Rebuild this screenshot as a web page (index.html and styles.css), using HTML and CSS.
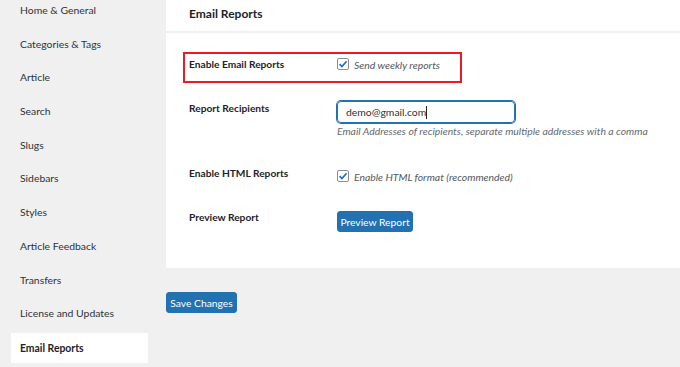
FILE: index.html
```html
<!DOCTYPE html>
<html lang="en">
<head>
<meta charset="UTF-8" />
<title>Email Reports</title>
<link rel="stylesheet" href="styles.css">
</head>
<body>
<div class="layout">
  <ul class="side-nav">
    <li>Home &amp; General</li>
    <li>Categories &amp; Tags</li>
    <li>Article</li>
    <li>Search</li>
    <li>Slugs</li>
    <li>Sidebars</li>
    <li>Styles</li>
    <li>Article Feedback</li>
    <li>Transfers</li>
    <li>License and Updates</li>
    <li class="active">Email Reports</li>
  </ul>

  <div class="content">
    <div class="panel">
      <div class="panel-head"><h2>Email Reports</h2></div>
      <div class="rows">
        <div class="row highlight">
          <div class="label">Enable Email Reports</div>
          <label class="check">
            <span class="box"><svg viewBox="0 0 12 12" width="12" height="12"><path d="M2.6 6.2 L5 8.6 L9.6 3.2" fill="none" stroke="#2271b1" stroke-width="1.7"/></svg></span>
            <span class="check-text">Send weekly reports</span>
          </label>
        </div>

        <div class="row recipients">
          <div class="label">Report Recipients</div>
          <div class="field">
            <div class="input">demo@gmail.com<span class="caret"></span></div>
            <p class="desc">Email Addresses of recipients, separate multiple addresses with a comma</p>
          </div>
        </div>

        <div class="row html-row">
          <div class="label">Enable HTML Reports</div>
          <label class="check">
            <span class="box"><svg viewBox="0 0 12 12" width="12" height="12"><path d="M2.6 6.2 L5 8.6 L9.6 3.2" fill="none" stroke="#2271b1" stroke-width="1.7"/></svg></span>
            <span class="check-text">Enable HTML format (recommended)</span>
          </label>
        </div>

        <div class="row preview-row">
          <div class="label">Preview Report</div>
          <button class="btn btn-small">Preview Report</button>
        </div>
      </div>
    </div>
    <button class="btn btn-save">Save Changes</button>
  </div>
</div>
</body>
</html>
```

FILE: styles.css
```css
* {
  box-sizing: border-box;
}
body {
  margin: 0;
  background: #f0f0f1;
  color: #1d2327;
  font-family: Lato, 'Liberation Sans', sans-serif;
  font-size: 10.4px;
  height: 367px;
  overflow: hidden;
}
.layout {
  display: flex;
  align-items: flex-start;
}

/* Sidebar tabs */
.side-nav {
  list-style: none;
  margin: -6px 0 0 0;
  padding: 0;
  width: 166px;
  flex-shrink: 0;
}
.side-nav li {
  height: 33.7px;
  line-height: 33.7px;
  margin: 0 18px 0 11px;
  padding: 0 9px;
  color: #2c3338;
  font-size: 10.4px;
}
.side-nav li.active {
  background: #fff;
  font-weight: 700;
  color: #1d2327;
  height: 30px;
  line-height: 30px;
  margin-top: 2px;
}

/* Main panel */
.content {
  flex: 1;
}
.panel {
  background: #fff;
  padding-bottom: 36px;
}
.panel-head {
  height: 33px;
  border-bottom: 2px solid #f0f0f3;
  padding-left: 23px;
}
.panel-head h2 {
  margin: 0;
  font-size: 12px;
  font-weight: 700;
  line-height: 28px;
}
.rows {
  padding-left: 17px;
}
.row {
  display: flex;
  align-items: flex-start;
}
.label {
  width: 154px;
  padding-left: 6px;
  font-weight: 700;
  font-size: 10.2px;
  line-height: 16px;
  flex-shrink: 0;
}
.highlight {
  width: 279px;
  height: 31px;
  margin-top: 19px;
  border: 2px solid #ea1b24;
}
.highlight .label {
  width: 152px;
  padding-left: 4px;
  margin-top: 2px;
}
.check {
  display: flex;
  align-items: flex-start;
  gap: 5px;
}
.highlight .check {
  margin-top: 4px;
}
.box {
  width: 12px;
  height: 12px;
  border: 1px solid #8c8f94;
  border-radius: 2px;
  display: flex;
  align-items: center;
  justify-content: center;
}
.box svg {
  display: block;
  flex-shrink: 0;
}
.check-text {
  font-style: italic;
  color: #50575e;
  line-height: 16px;
  margin-top: -1px;
  white-space: nowrap;
}

.recipients {
  margin-top: 17px;
}
.input {
  margin-top: 1px;
  width: 178px;
  height: 22px;
  border: 1px solid #2271b1;
  border-radius: 4px;
  box-shadow: 0 0 0 1px #2271b1;
  padding: 0 8px;
  line-height: 20px;
  font-size: 10.4px;
  color: #2c3338;
  display: flex;
  align-items: center;
}
.caret {
  display: inline-block;
  width: 1px;
  height: 13px;
  background: #1d2327;
}
.desc {
  margin: 0;
  font-style: italic;
  color: #646970;
  line-height: 16px;
  font-size: 10.4px;
  white-space: nowrap;
}

.html-row {
  margin-top: 26px;
  height: 18px;
}
.html-row .check {
  margin-top: 5px;
}

.preview-row {
  margin-top: 26px;
}

.btn {
  background: #2271b1;
  color: #fff;
  border: 1px solid #2271b1;
  border-radius: 3px;
  font-family: inherit;
  font-size: 10.3px;
  padding: 0;
  white-space: nowrap;
  cursor: pointer;
}
.btn-small {
  margin-top: 2px;
  width: 76px;
  height: 21px;
}
.btn-save {
  margin-top: 24px;
  width: 71px;
  height: 21px;
}
```
